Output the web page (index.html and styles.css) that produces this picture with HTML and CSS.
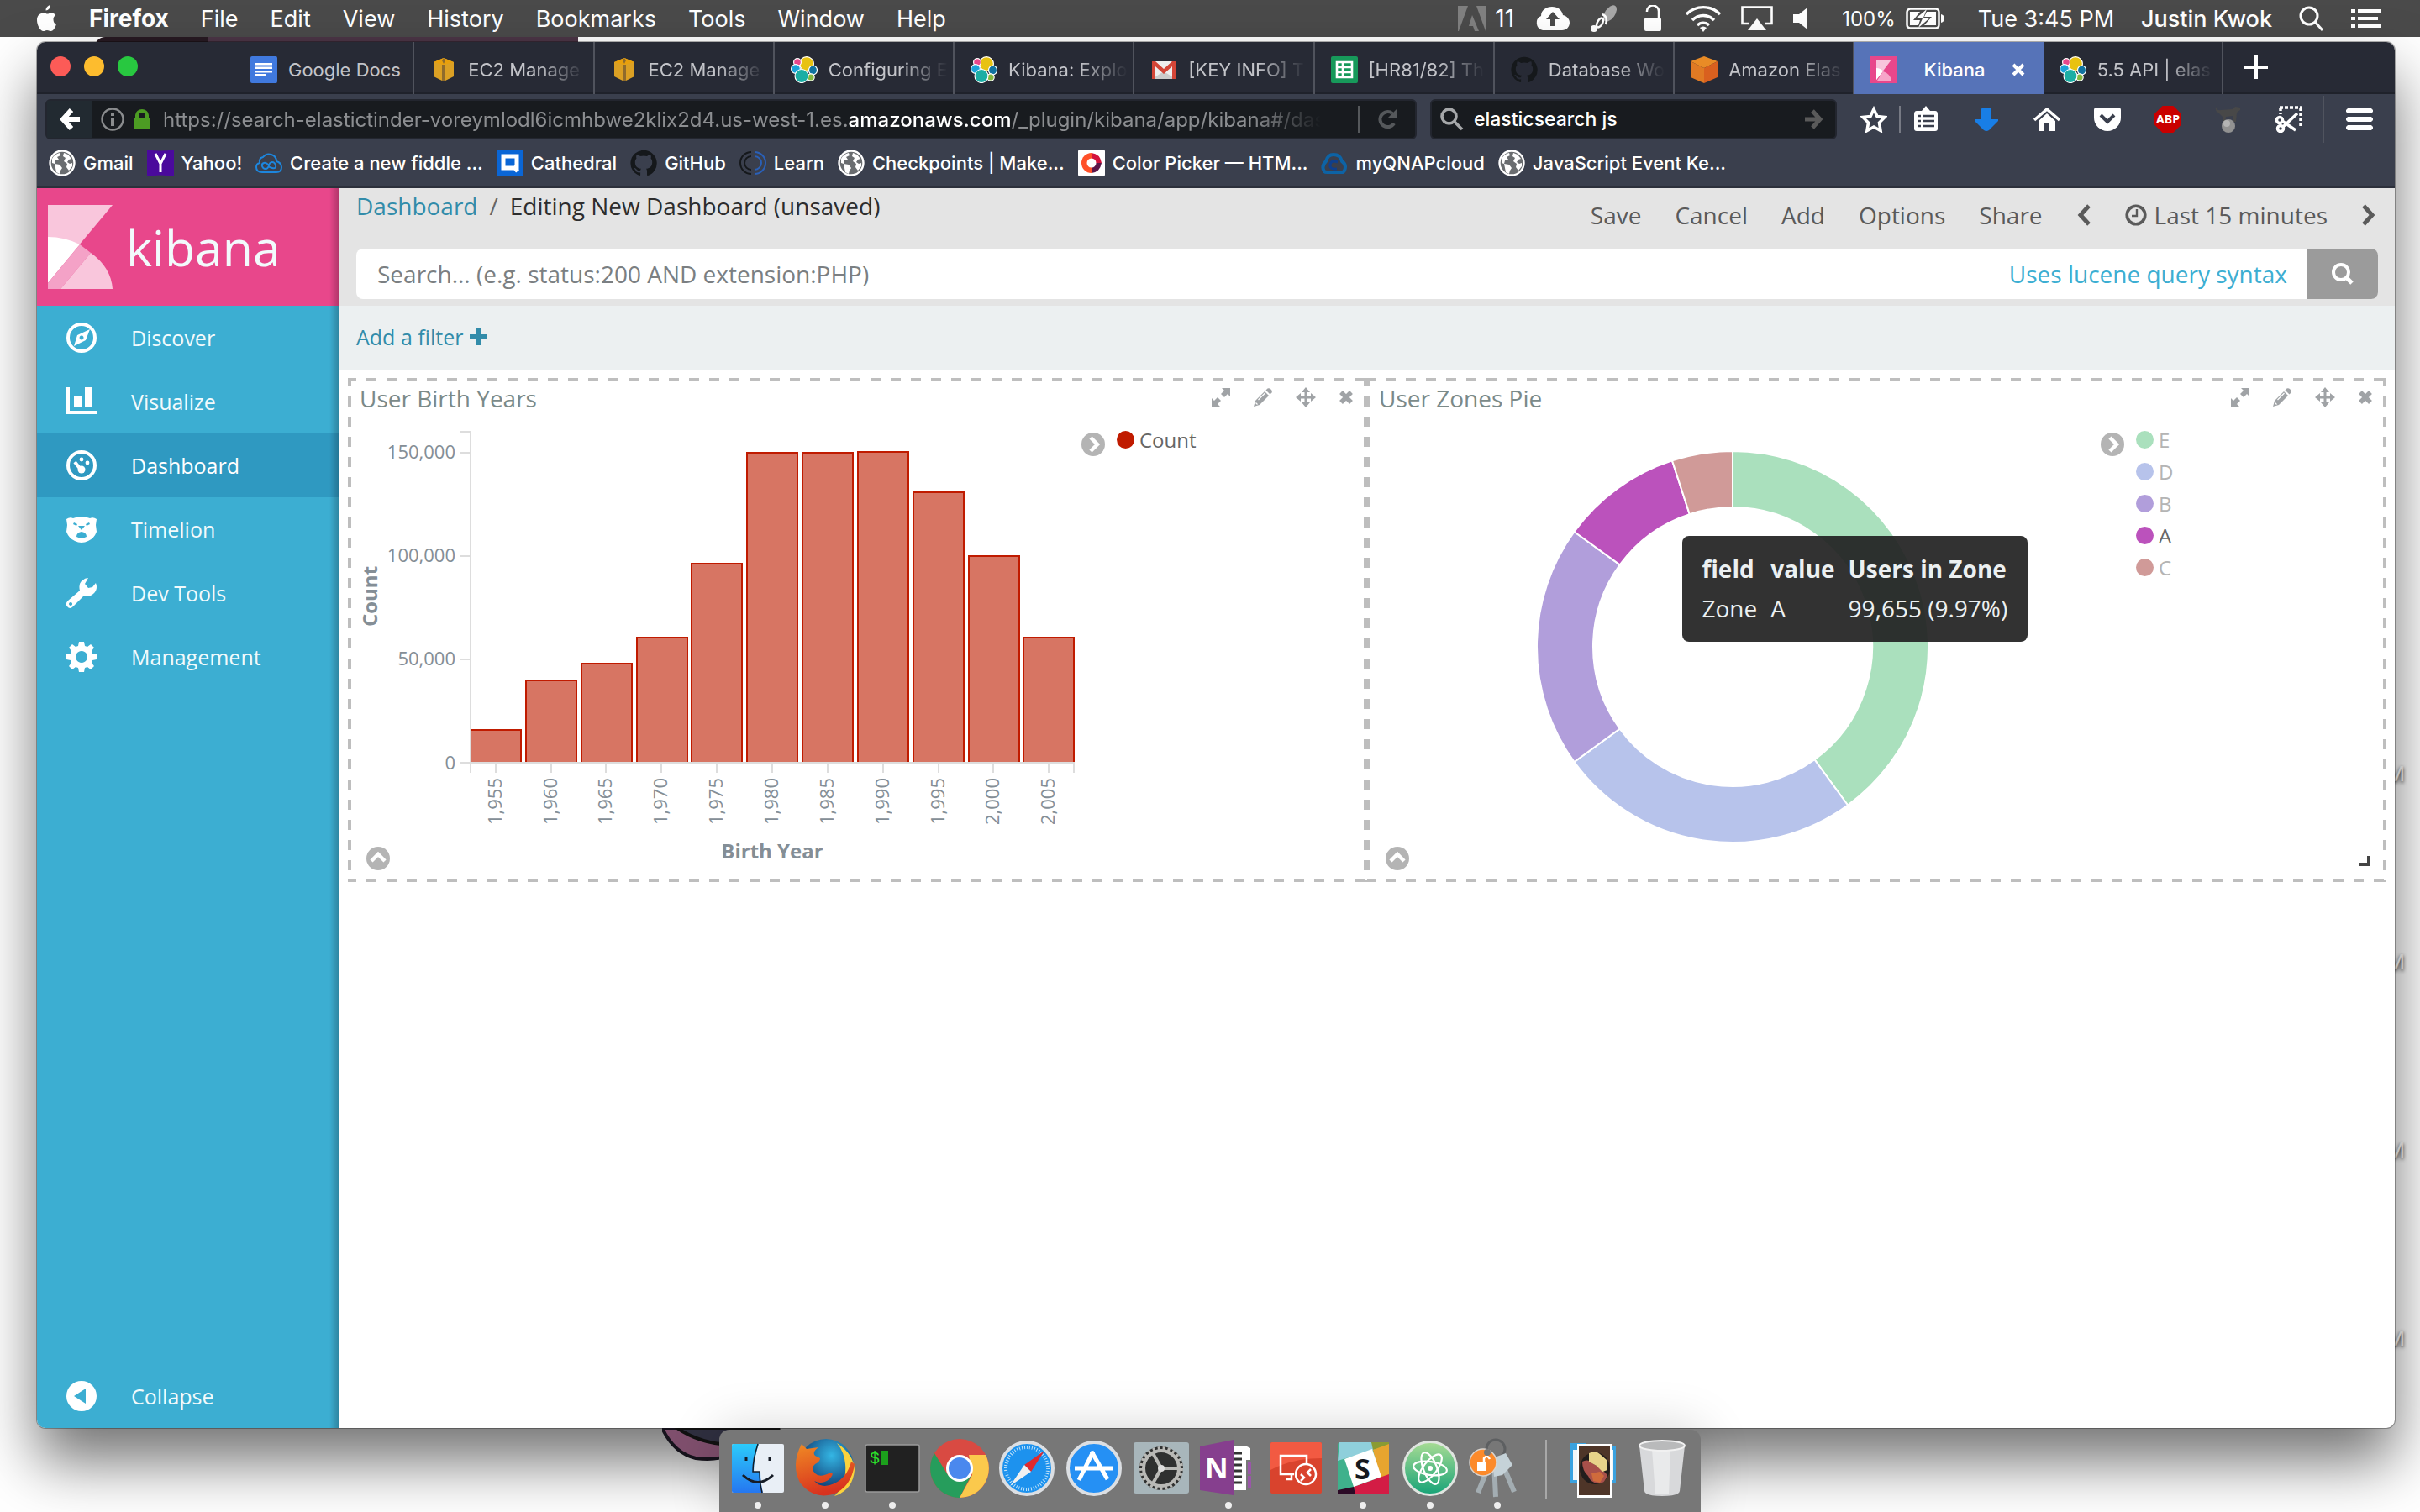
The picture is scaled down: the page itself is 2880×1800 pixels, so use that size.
FILE: index.html
```html
<!DOCTYPE html>
<html lang="en">
<head>
<meta charset="utf-8">
<title>Kibana</title>
<link rel="stylesheet" href="styles.css">
</head>
<body>
<svg class="sprite" aria-hidden="true">
  <symbol id="i-elastic" viewBox="0 0 32 32"><g stroke="#fff" stroke-width="1.2"><circle cx="19" cy="9" r="8.4" fill="#e8c211"/><circle cx="8" cy="7" r="4.4" fill="#e8478b"/><ellipse cx="6" cy="15" rx="5.4" ry="5.4" fill="#1ba2d8"/><ellipse cx="26.500" cy="16.500" rx="5" ry="5.500" fill="#10739f"/><ellipse cx="24" cy="25" rx="4.200" ry="4.200" fill="#86b93f"/><circle cx="13" cy="23.500" r="8" fill="#1caea4"/></g></symbol>
  <symbol id="i-ec2" viewBox="0 0 32 32"><path d="M4 7l12-5 12 5v17l-12 6-12-6z" fill="#dba024"/><path d="M4 7l12-5 12 5-12 3z" fill="#e9a00c"/><path d="M14 10h4v20h-4z" fill="#8f6b2c"/><path d="M16 2l2 3-2 4-2-4z" fill="#8f6b2c"/></symbol>
  <symbol id="i-github" viewBox="0 0 32 32"><path fill="#15181b" d="M16 .8a15.500 15.500 0 0 0-5 30.200c.8.100 1.100-.3 1.100-.8v-3c-4.500 1-5.400-1.900-5.400-1.900-.7-1.900-1.800-2.400-1.800-2.400-1.400-1 .1-1 .1-1 1.600.1 2.500 1.700 2.500 1.700 1.400 2.400 3.700 1.700 4.600 1.300.1-1 .6-1.700 1-2.100-3.600-.4-7.300-1.800-7.300-7.900 0-1.700.6-3.200 1.700-4.300-.2-.4-.7-2 .1-4.200 0 0 1.400-.4 4.400 1.600a15 15 0 0 1 8 0c3-2 4.400-1.600 4.400-1.600.8 2.200.3 3.800.1 4.200 1.100 1.100 1.700 2.600 1.700 4.300 0 6.100-3.700 7.500-7.300 7.900.6.500 1.100 1.500 1.100 3v4.400c0 .5.300.9 1.100.8A15.500 15.500 0 0 0 16 .8z"/></symbol>
  <symbol id="i-globe" viewBox="0 0 32 32"><circle cx="16" cy="16" r="14.500" fill="#6a6d70" stroke="#fff" stroke-width="2.400"/><path fill="#fff" d="M4 11c2-4 5-6 9-7l1 3-4 2 2 3-4 1-1 4-3-1zM7 17l6 1 3 4-2 3-1 4-4-2-1-5zM18 4l5 2 4 5-3 1-2 3 3 2 3-1v4l-4 5-3-4 1-4-4-3 2-4-3-2z"/></symbol>
  <symbol id="i-expand" viewBox="0 0 22 22"><path fill="#a0a3a6" d="M12 0h10v10l-3-3-4 4-4-4 4-4zM0 22V12l3 3 4-4 4 4-4 4 3 3z"/></symbol>
  <symbol id="i-pencil" viewBox="0 0 22 22"><path fill="#a0a3a6" d="M13 4l5 5L7 20l-7 2 2-7z"/><path fill="#a0a3a6" d="M14.500 2.500l2-2q2-1 4 1t1 4l-2 2z"/><path stroke="#fff" stroke-width="1.200" d="M5.500 14L13.500 6M2.500 17.500l2 2"/></symbol>
  <symbol id="i-move" viewBox="0 0 24 24"><path fill="#a0a3a6" d="M12 0l5 6h-3.500v4.500H18V7l6 5-6 5v-3.500h-4.500V18H17l-5 6-5-6h3.500v-4.500H6V17l-6-5 6-5v3.500h4.500V6H7z"/></symbol>
  <symbol id="i-close" viewBox="0 0 16 16"><path stroke="#a0a3a6" stroke-width="5.400" d="M2 2l12 12M14 2L2 14"/></symbol>
  <symbol id="i-circle-right" viewBox="0 0 28 28"><circle cx="14" cy="14" r="14" fill="#b4b4b4"/><path fill="none" stroke="#fff" stroke-width="4.500" d="M11 6l8 8-8 8"/></symbol>
  <symbol id="i-circle-up" viewBox="0 0 28 28"><circle cx="14" cy="14" r="14" fill="#b4b4b4"/><path fill="none" stroke="#fff" stroke-width="4.500" d="M6 17l8-8 8 8"/></symbol>
</svg>

<header class="menubar">
  <nav class="menus" aria-label="Menu bar">
    <button class="menu-item" aria-label="Apple"><svg width="26" height="32" viewBox="0 0 26 32"><path fill="#fff" d="M18 0c.3 3-2.500 6.500-5.400 6.500C12.200 3.500 15 .4 18 0zM21.500 17c0-3.300 2.600-4.900 2.800-5-1.600-2.300-4-2.600-4.800-2.600-2-.2-4 1.200-5 1.200s-2.700-1.200-4.400-1.200C4.500 9.500 2 13 2 18c0 6 4 13 7.500 13 1.700 0 2.400-1.100 4.500-1.100s2.700 1.100 4.500 1.100c3.200 0 5.700-5.500 6.300-7.800-.2-.1-3.300-1.500-3.300-6.200z"/></svg></button>
    <button class="menu-item app-name">Firefox</button>
    <button class="menu-item">File</button>
    <button class="menu-item">Edit</button>
    <button class="menu-item">View</button>
    <button class="menu-item">History</button>
    <button class="menu-item">Bookmarks</button>
    <button class="menu-item">Tools</button>
    <button class="menu-item">Window</button>
    <button class="menu-item">Help</button>
  </nav>
  <div class="tray">
    <svg width="34" height="30" viewBox="0 0 34 30"><path fill="#808080" d="M0 0h12L1 30H0zM22 0h12v30h-1zM17 11l8 19h-5l-2-6h-5z"/></svg>
    <span class="adobe-count">11</span>
    <svg width="40" height="30" viewBox="0 0 40 30"><path fill="#fff" fill-rule="evenodd" d="M8 29a9 9 0 0 1-2-17C6 5 12 1 19 1c7 0 12 4 13 10 5 1 8 5 8 9 0 5-4 9-9 9zM20 7l-8 9h5v8h6v-8h5z"/></svg>
    <svg width="36" height="34" viewBox="0 0 36 34"><ellipse cx="24" cy="11" rx="6" ry="11" transform="rotate(35 24 11)" fill="#a8a8a8"/><g fill="none" stroke="#fff" stroke-width="2.500"><ellipse cx="12" cy="22" rx="3" ry="6" transform="rotate(30 12 22)"/><path d="M15 12q7 3 4 12"/></g><circle cx="5" cy="29" r="4" fill="#fff"/></svg>
    <svg width="30" height="32" viewBox="0 0 30 32"><rect x="5" y="15" width="20" height="16" rx="2" fill="#fff"/><path fill="none" stroke="#fff" stroke-width="2.500" d="M8 8V7a6 6 0 0 1 14 1v8"/></svg>
    <svg width="42" height="32" viewBox="0 0 42 32"><g fill="none" stroke="#fff" stroke-width="3.400"><path d="M1 11a28 28 0 0 1 40 0M8 18a18 18 0 0 1 26 0M14 24a10 10 0 0 1 14 0"/></g><path fill="#fff" d="M21 32l-4-5q4-3 8 0z"/></svg>
    <svg width="38" height="30" viewBox="0 0 38 30"><path fill="none" stroke="#fff" stroke-width="2.600" d="M9 21H1.500V1.500h35V21H29"/><path fill="#fff" d="M19 15l11 14H8z"/></svg>
    <svg width="34" height="26" viewBox="0 0 34 26"><path fill="#fff" d="M0 8h7l10-8v26L7 18H0z"/></svg>
    <span class="battery-text">100%</span>
    <svg width="46" height="26" viewBox="0 0 46 26"><rect x="1.500" y="1.500" width="38" height="23" rx="4" fill="none" stroke="#fff" stroke-width="2.500"/><path fill="#fff" d="M5 5h12l-8 10h8l-2 6H5zM36 5H25l-3 6h9l-9 10h14zM42 8q4 1 4 5t-4 5zM25 2L12 13h8l-5 11 14-12h-8z"/></svg>
  </div>
  <div class="tray tray-end">
    <span class="menu-text">Tue 3:45 PM</span>
    <span class="menu-text user">Justin Kwok</span>
    <button class="menu-item" aria-label="Spotlight"><svg width="30" height="30" viewBox="0 0 30 30"><g fill="none" stroke="#fff" stroke-width="3"><circle cx="12" cy="12" r="10"/><path d="M19 19l9 10"/></g></svg></button>
    <button class="menu-item" aria-label="Notifications"><svg width="36" height="22" viewBox="0 0 36 22"><path fill="#fff" d="M0 0h5v4H0zM8 0h28v4H8zM0 9h5v4H0zM8 9h24v4H8zM0 18h5v4H0zM8 18h28v4H8z"/></svg></button>
  </div>
</header>

<div class="desktop">
  <div class="back-window"></div>
  <div class="file-labels" aria-hidden="true"><span>M</span><span>M</span><span>M</span><span>M</span></div>
  <svg class="wallpaper" width="170" height="60" viewBox="0 0 170 60" aria-hidden="true"><path d="M0 0q14 30 40 36 24 3 42-4l30-32z" fill="#7f4f6d" stroke="#16131c" stroke-width="4"/><path d="M18 0q26 18 62 20l60-20z" fill="#2f2f3f" stroke="#111" stroke-width="4"/></svg>

  <div class="window">
    <div class="tabstrip">
      <div class="lights"><button class="light red" aria-label="Close"></button><button class="light yellow" aria-label="Minimize"></button><button class="light green" aria-label="Zoom"></button></div>
      <div class="tabs">
        <button class="tab"><svg class="ico" viewBox="0 0 32 32"><rect width="32" height="32" rx="2" fill="#4079de"/><path fill="#fff" d="M6 8h20v2.500H6zM6 12.500h20V15H6zM6 17h20v2.500H6zM6 21h12v2.500H6z"/></svg><span>Google Docs</span></button>
        <button class="tab"><svg class="ico"><use href="#i-ec2"/></svg><span>EC2 Manage</span></button>
        <button class="tab"><svg class="ico"><use href="#i-ec2"/></svg><span>EC2 Manage</span></button>
        <button class="tab"><svg class="ico"><use href="#i-elastic"/></svg><span>Configuring E</span></button>
        <button class="tab"><svg class="ico"><use href="#i-elastic"/></svg><span>Kibana: Explo</span></button>
        <button class="tab"><svg class="ico" viewBox="0 0 32 32"><path fill="#eee" d="M2 6h28v21H2z"/><path fill="#ccc" d="M16 18L2 27h28z"/><path fill="#d44638" d="M2 6h4l10 9L26 6h4v21h-4V12l-10 9L6 12v15H2z"/></svg><span>[KEY INFO] T</span></button>
        <button class="tab"><svg class="ico" viewBox="0 0 32 32"><rect width="32" height="32" rx="2" fill="#17995a"/><path fill="none" stroke="#fff" stroke-width="2.600" d="M7 7h18v18H7zM7 13h18M7 19h18M14 7v18"/></svg><span>[HR81/82] Th</span></button>
        <button class="tab"><svg class="ico"><use href="#i-github"/></svg><span>Database Wo</span></button>
        <button class="tab"><svg class="ico" viewBox="0 0 32 32"><path fill="#e98b26" d="M0 6L16 0l16 6-16 8z"/><path fill="#e07a24" d="M0 6l16 8v18L0 25z"/><path fill="#d9601f" d="M32 6l-16 8v18l16-7z"/></svg><span>Amazon Elas</span></button>
        <button class="tab active"><svg class="ico" viewBox="0 0 32 32"><path fill="#e8478b" d="M0 0h32v32H0z"/><path fill="#f8c4dc" d="M7 4h18L7 28z"/><path fill="#fff" d="M7 14q5 0 8 4L7 28z"/><path fill="#f6a5c9" d="M15 18q9 3 10 11H8z"/></svg><span>Kibana</span><svg class="tab-close" viewBox="0 0 16 16"><path stroke="#fff" stroke-width="4" d="M2 2l12 12M14 2L2 14"/></svg></button>
        <button class="tab"><svg class="ico"><use href="#i-elastic"/></svg><span>5.5 API | elas</span></button>
      </div>
      <button class="new-tab" aria-label="New tab"><svg width="28" height="28" viewBox="0 0 28 28"><path stroke="#fff" stroke-width="4" d="M14 0v28M0 14h28"/></svg></button>
    </div>

    <div class="navbar">
      <div class="urlbar">
        <button class="back" aria-label="Back"><svg width="24" height="26" viewBox="0 0 24 26"><path fill="none" stroke="#fff" stroke-width="6" d="M14 2L4 13l10 11M4 13h20"/></svg></button>
        <svg width="28" height="28" viewBox="0 0 28 28"><circle cx="14" cy="14" r="12.500" fill="none" stroke="#8a8c8e" stroke-width="2.400"/><path fill="#8a8c8e" d="M12 6h4v4h-4zM12 12h4v10h-4z"/></svg>
        <svg width="22" height="24" viewBox="0 0 22 24"><rect x="1" y="10" width="20" height="14" rx="2" fill="#4c9c23"/><path fill="none" stroke="#4c9c23" stroke-width="4" d="M5 11V7a6 5 0 0 1 12 0v4"/></svg>
        <div class="url" role="textbox" contenteditable="true" spellcheck="false" aria-label="Address">https://search-elastictinder-voreymlodl6icmhbwe2klix2d4.us-west-1.es.<b>amazonaws.com</b>/_plugin/kibana/app/kibana#/das</div>
        <button class="reload" aria-label="Reload"><svg width="24" height="24" viewBox="0 0 24 24"><path fill="none" stroke="#55585b" stroke-width="4" d="M20 17a9 9 0 1 1-2-12"/><path fill="#55585b" d="M23 0v10H13z"/></svg></button>
      </div>
      <div class="searchbar">
        <svg width="28" height="28" viewBox="0 0 28 28"><g fill="none" stroke="#a6a8aa" stroke-width="3.600"><circle cx="10.500" cy="10.500" r="8.500"/><path d="M17 17l9 9"/></g></svg>
        <input type="text" value="elasticsearch js" aria-label="Search the web">
        <svg width="22" height="24" viewBox="0 0 22 24"><path fill="none" stroke="#5a5a5a" stroke-width="5" d="M0 12h16M9 2l9 10-9 10"/></svg>
      </div>
      <div class="tools">
        <button aria-label="Bookmark"><svg width="32" height="32" viewBox="0 0 32 32"><path fill="none" stroke="#fff" stroke-width="3.600" d="M16 4l4 8.500 9 1-6.500 6.500 1.500 9.500-8-4.500-8 4.500L9.500 20 3 13.500l9-1z"/></svg></button>
        <i class="rule"></i>
        <button aria-label="Reading list"><svg width="30" height="32" viewBox="0 0 30 32"><path fill="#fff" d="M10 6l5-6 5 6h6q3 0 3 4v17q0 3-3 3H4q-3 0-3-3V10q0-4 3-4z"/><path stroke="#3a3f4d" stroke-width="2.400" d="M5 12h4M5 18h4M5 24h4M11 12h14M11 18h14M11 24h14"/></svg></button>
        <button aria-label="Downloads"><svg width="28" height="28" viewBox="0 0 28 28"><path fill="#187ee6" d="M8 2q0-2 2-2h8q2 0 2 2v12h8v2L17 27q-3 2-6 0L0 16v-2h8z"/></svg></button>
        <button aria-label="Home"><svg width="32" height="28" viewBox="0 0 32 28"><path fill="none" stroke="#fff" stroke-width="3.500" d="M1 15L16 2l15 13"/><path fill="#fff" d="M6 16l10-9 10 9v12h-7V18h-6v10H6z"/></svg></button>
        <button aria-label="Pocket"><svg width="32" height="28" viewBox="0 0 32 28"><path fill="#fff" d="M0 3q0-3 3-3h26q3 0 3 3v9a16 16 0 0 1-32 0z"/><path fill="none" stroke="#3a3f4d" stroke-width="4" d="M8 9l8 8 8-8"/></svg></button>
        <button class="abp"><span>ABP</span></button>
        <button aria-label="Greasemonkey"><svg width="32" height="32" viewBox="0 0 32 32"><path fill="#484848" d="M1 0q0 6 6 5l14-1 3-3 6 1v3l-4 3-1 11h-3l-1-7-8 1-1 7h-3V13L4 8Q0 7 1 0z"/><circle cx="16" cy="24" r="8" fill="#929292"/><circle cx="14" cy="21" r="4" fill="#b4b4b4"/></svg></button>
        <button aria-label="Screenshot"><svg width="32" height="32" viewBox="0 0 32 32"><g fill="none" stroke="#fff" stroke-width="3.500"><path d="M5 2h27" stroke-dasharray="4 2"/><path d="M6 2v8M30 2v24" stroke-dasharray="4 2"/><circle cx="5" cy="17" r="3.500"/><circle cx="6" cy="27" r="3.500"/><path d="M8 18l16 11M9 25L26 9"/></g></svg></button>
        <i class="rule tall"></i>
        <button class="burger" aria-label="Menu"><svg width="32" height="26" viewBox="0 0 32 26"><path fill="#fff" d="M2 0h28l2 2v2l-2 2H2L0 4V2zM2 10h28l2 2v2l-2 2H2l-2-2v-2zM2 20h28l2 2v2l-2 2H2l-2-2v-2z"/></svg></button>
      </div>
    </div>

    <nav class="bookmarks" aria-label="Bookmarks">
      <a href="#"><svg class="ico"><use href="#i-globe"/></svg>Gmail</a>
      <a href="#"><svg class="ico" viewBox="0 0 32 32"><path fill="#4a0a9c" d="M0 0q16 3 32 0v32q-16-3-32 0z"/><path stroke="#fff" stroke-width="3" fill="none" d="M10 5l6 12 6-12M16 16v11"/></svg>Yahoo!</a>
      <a href="#"><svg class="ico" viewBox="0 0 32 32"><g fill="none" stroke="#1d86dd" stroke-width="2"><path d="M8 27q-7 0-7-6 0-4 4-5-1-6 4-7Q13 4 19 6q6 2 6 8 6 2 6 7 0 6-6 6z"/><path d="M16 19q-3-4-6-3t-2 4 4 3 4-4 4-4 4 4-4 3-4-3z"/></g></svg>Create a new fiddle ...</a>
      <a href="#"><svg class="ico" viewBox="0 0 32 32"><rect width="32" height="32" rx="4" fill="#0a66d6"/><path fill="none" stroke="#fff" stroke-width="5" d="M8 8h16v14H8zM20 20l5 6"/></svg>Cathedral</a>
      <a href="#"><svg class="ico"><use href="#i-github"/></svg>GitHub</a>
      <a href="#"><svg class="ico" viewBox="0 0 32 32"><g fill="none" stroke-width="2"><path stroke="#15181b" d="M14 3a13 13 0 0 0 0 26M14 8a8 8 0 0 0 0 16"/><path stroke="#2a60b8" d="M18 3a13 13 0 0 1 0 26M18 8a8 8 0 0 1 0 16"/></g></svg>Learn</a>
      <a href="#"><svg class="ico"><use href="#i-globe"/></svg>Checkpoints | Make...</a>
      <a href="#"><svg class="ico" viewBox="0 0 32 32"><rect width="32" height="32" rx="2" fill="#fff"/><path fill="#ff5029" d="M16 4v24A12 12 0 0 1 16 4z"/><path fill="#d3123c" d="M16 4q10 1 12 12H16z"/><path fill="#5c1649" d="M16 28q10-1 12-12H16z"/><circle cx="16" cy="16" r="5.500" fill="#fff"/></svg>Color Picker — HTM...</a>
      <a href="#"><svg class="ico" viewBox="0 0 32 32"><path fill="none" stroke="#0d63a5" stroke-width="4" d="M4 26q-4-6 2-12 2-8 9-8 8 0 10 8 6 4 3 11-1 2-3 2H7q-2 0-3-1z"/><path fill="none" stroke="#0f3f8e" stroke-width="3" d="M20 15q-8-3-9 3t8 5"/></svg>myQNAPcloud</a>
      <a href="#"><svg class="ico"><use href="#i-globe"/></svg>JavaScript Event Ke...</a>
    </nav>

    <div class="kibana">
      <aside class="sidebar">
        <a class="logo" href="#"><svg width="77" height="100" viewBox="0 0 77 100"><path fill="#f9c6dc" d="M0 0h77L0 92z"/><path fill="#fff" d="M0 38q20 0 38 9L0 93z"/><path fill="#f4a2c7" d="M38 47l13 10-36 43H0v-7z"/><path fill="#f9c6dc" d="M51 57q24 17 26 43H15z"/></svg><span>kibana</span></a>
        <a class="nav-link" href="#"><svg viewBox="0 0 36 36"><circle cx="18" cy="18" r="16" fill="none" stroke="#fff" stroke-width="4"/><path fill="#fff" fill-rule="evenodd" d="M28 8L23 21 9 28l4-13zM18 15.500a2.500 2.500 0 1 0 .1 0z"/></svg>Discover</a>
        <a class="nav-link" href="#"><svg viewBox="0 0 36 36"><path fill="#fff" d="M0 1h4v28h32v4H0zM9 11h9v13H9zM22 1h9v23h-9z"/></svg>Visualize</a>
        <a class="nav-link current" href="#"><svg viewBox="0 0 36 36"><circle cx="18" cy="18" r="16" fill="none" stroke="#fff" stroke-width="4"/><path stroke="#fff" stroke-width="4" d="M10 14l8 10"/><circle cx="18" cy="23" r="4.500" fill="#fff"/><circle cx="18" cy="11" r="2.400" fill="#fff"/><circle cx="25" cy="15" r="2.400" fill="#fff"/></svg>Dashboard</a>
        <a class="nav-link" href="#"><svg viewBox="0 0 36 36"><path fill="#fff" fill-rule="evenodd" d="M0 6q4-3 8-1 10-4 20 0 4-2 8 1l-1 7 1 8q-3 8-10 11-8 4-16 0Q3 29 0 21l1-8zM9 10l4 2-1 2-4-2zM27 10l-4 2 1 2 4-2zM14 14h8l-4 5zM12 27q0-5 6-6 6 1 6 6-6 3-12 0z"/></svg>Timelion</a>
        <a class="nav-link" href="#"><svg viewBox="0 0 36 36"><path fill="#fff" fill-rule="evenodd" d="M26 0l-4 7 4 5 5-1 4-5q3 8-3 13-4 4-11 2L8 34q-4 4-7 0-3-3 1-7l14-12q-2-8 3-12 3-3 7-3zM5 29a2 2 0 1 0 .1 0z"/></svg>Dev Tools</a>
        <a class="nav-link" href="#"><svg viewBox="0 0 36 36"><path fill="#fff" fill-rule="evenodd" d="M15 0h6l1 5 3 1 4-3 4 4-3 4 1 3 5 1v6l-5 1-1 3 3 4-4 4-4-3-3 1-1 5h-6l-1-5-3-1-4 3-4-4 3-4-1-3-5-1v-6l5-1 1-3-3-4 4-4 4 3 3-1zM18 11a7 7 0 1 0 .1 0z"/></svg>Management</a>
        <button class="nav-link collapse"><svg viewBox="0 0 36 36"><circle cx="18" cy="18" r="18" fill="#fff"/><path fill="#3caed2" d="M23 9v18L9 18z"/></svg>Collapse</button>
      </aside>

      <main class="content">
        <div class="topnav">
          <div class="topnav-row">
            <div class="crumbs"><a href="#">Dashboard</a><span class="slash">/</span><span>Editing New Dashboard (unsaved)</span></div>
            <div class="actions">
              <button>Save</button><button>Cancel</button><button>Add</button><button>Options</button><button>Share</button>
              <button aria-label="Earlier"><svg width="18" height="26" viewBox="0 0 18 26"><path fill="none" stroke="#5a5a5a" stroke-width="5" d="M15 2L5 13l10 11"/></svg></button>
              <button class="time"><svg width="26" height="26" viewBox="0 0 26 26"><g fill="none" stroke="#5a5a5a"><circle cx="13" cy="13" r="10.800" stroke-width="3.600"/><path stroke-width="2.400" d="M14 6v8H8"/></g></svg>Last 15 minutes</button>
              <button aria-label="Later"><svg width="18" height="26" viewBox="0 0 18 26"><path fill="none" stroke="#5a5a5a" stroke-width="5" d="M3 2l10 11L3 24"/></svg></button>
            </div>
          </div>
          <form class="query">
            <input type="text" placeholder="Search... (e.g. status:200 AND extension:PHP)" aria-label="Query">
            <a href="#">Uses lucene query syntax</a>
            <button type="button" aria-label="Search"><svg width="28" height="28" viewBox="0 0 28 28"><g fill="none" stroke="#fff" stroke-width="4"><circle cx="12" cy="12" r="9"/><path stroke-width="5" d="M18 18l7 7"/></g></svg></button>
          </form>
        </div>
        <div class="filterbar"><a href="#">Add a filter <svg width="20" height="20" viewBox="0 0 20 20"><path stroke="#328caa" stroke-width="6" d="M10 0v20M0 10h20"/></svg></a></div>

        <div class="grid">
          <section class="panel">
            <header><h2>User Birth Years</h2>
              <div class="panel-tools"><button aria-label="Expand"><svg width="22" height="22"><use href="#i-expand"/></svg></button><button aria-label="Edit"><svg width="22" height="22"><use href="#i-pencil"/></svg></button><button aria-label="Move"><svg width="24" height="24"><use href="#i-move"/></svg></button><button aria-label="Remove"><svg width="16" height="16"><use href="#i-close"/></svg></button></div>
            </header>
            <div class="panel-body">
              <div class="chart">
                <svg class="bars" viewBox="0 0 869 546" role="img" aria-label="Count by birth year">
                  <g class="bar">
                    <path d="M142 408V369h60v39"/><path d="M208 408V310h60v98"/><path d="M274 408V290h60v118"/><path d="M340 408V259h60v149"/><path d="M405 408V171h60v237"/><path d="M471 408V39h60v369"/><path d="M537 408V39h60v369"/><path d="M603 408V38h60v370"/><path d="M669 408V86h60v322"/><path d="M735 408V162h60v246"/><path d="M800 408V259h60v149"/>
                  </g>
                  <path class="axis" d="M130 14h12v394M130 39h12M130 162h12M130 285h12M130 408h730v12M142 408v12M172 408v12M238 408v12M303 408v12M369 408v12M435 408v12M501 408v12M567 408v12M633 408v12M699 408v12M764 408v12M830 408v12"/>
                  <g class="label">
                    <text x="124" y="46">150,000</text><text x="124" y="169">100,000</text><text x="124" y="292">50,000</text><text x="124" y="416">0</text>
                    <text transform="translate(179 426) rotate(-90)">1,955</text><text transform="translate(245 426) rotate(-90)">1,960</text><text transform="translate(310 426) rotate(-90)">1,965</text><text transform="translate(376 426) rotate(-90)">1,970</text><text transform="translate(442 426) rotate(-90)">1,975</text><text transform="translate(508 426) rotate(-90)">1,980</text><text transform="translate(574 426) rotate(-90)">1,985</text><text transform="translate(640 426) rotate(-90)">1,990</text><text transform="translate(706 426) rotate(-90)">1,995</text><text transform="translate(771 426) rotate(-90)">2,000</text><text transform="translate(837 426) rotate(-90)">2,005</text>
                  </g>
                  <g class="axis-title"><text x="501" y="522">Birth Year</text><text transform="translate(31 210) rotate(-90)">Count</text></g>
                </svg>
              </div>
              <div class="legend">
                <button class="legend-toggle" aria-label="Toggle legend"><svg width="28" height="28"><use href="#i-circle-right"/></svg></button>
                <ul><li><button class="key count">Count</button></li></ul>
              </div>
            </div>
            <button class="spy" aria-label="Show data"><svg width="28" height="28"><use href="#i-circle-up"/></svg></button>
          </section>

          <section class="panel">
            <header><h2>User Zones Pie</h2>
              <div class="panel-tools"><button aria-label="Expand"><svg width="22" height="22"><use href="#i-expand"/></svg></button><button aria-label="Edit"><svg width="22" height="22"><use href="#i-pencil"/></svg></button><button aria-label="Move"><svg width="24" height="24"><use href="#i-move"/></svg></button><button aria-label="Remove"><svg width="16" height="16"><use href="#i-close"/></svg></button></div>
            </header>
            <div class="panel-body">
              <div class="chart pie">
                <div class="donut">
                  <svg width="468" height="468" viewBox="-234 -234 468 468" role="img" aria-label="Users by zone"><g stroke="#fff" stroke-width="2">
                    <path fill="#aae0bd" d="M0-233A233 233 0 0 1 137 188.500L97.600 134.300A166 166 0 0 0 0-166z"/>
                    <path fill="#b7c3eb" d="M137 188.500A233 233 0 0 1-188.500 137L-134.300 97.600A166 166 0 0 0 97.600 134.300z"/>
                    <path fill="#b19edb" d="M-188.500 137A233 233 0 0 1-188.500-137L-134.300-97.600A166 166 0 0 0-134.300 97.600z"/>
                    <path fill="#bb52bc" d="M-188.500-137A233 233 0 0 1-72-221.600L-51.300-157.900A166 166 0 0 0-134.300-97.600z"/>
                    <path fill="#d09a98" d="M-72-221.600A233 233 0 0 1 0-233V-166A166 166 0 0 0-51.300-157.900z"/>
                  </g></svg>
                  <div class="tooltip" role="tooltip"><table><thead><tr><th>field</th><th>value</th><th>Users in Zone</th></tr></thead><tbody><tr><td>Zone</td><td>A</td><td>99,655 (9.97%)</td></tr></tbody></table></div>
                </div>
              </div>
              <div class="legend">
                <button class="legend-toggle" aria-label="Toggle legend"><svg width="28" height="28"><use href="#i-circle-right"/></svg></button>
                <ul><li><button class="key e dim">E</button></li><li><button class="key d dim">D</button></li><li><button class="key b dim">B</button></li><li><button class="key a">A</button></li><li><button class="key c dim">C</button></li></ul>
              </div>
            </div>
            <button class="spy" aria-label="Show data"><svg width="28" height="28"><use href="#i-circle-up"/></svg></button>
            <i class="resize"></i>
          </section>
        </div>
      </main>
    </div>
  </div>

  <nav class="dock" aria-label="Dock">
    <button class="app running" aria-label="Finder"><svg viewBox="0 0 80 80"><defs><linearGradient id="gf" x2="0" y2="1"><stop stop-color="#2ccbfb"/><stop offset="1" stop-color="#2577f0"/></linearGradient></defs><rect x="9" y="11" width="62" height="58" rx="2" fill="#e9eff6"/><path fill="url(#gf)" d="M9 13q0-2 2-2h30q-6 18-6 33h8q0 14 3 25H11q-2 0-2-2z"/><g fill="none" stroke="#161c26" stroke-width="3"><path d="M26 26v5M54 26v5M22 48q18 17 36 0"/><path stroke-width="1.500" d="M40 11q-6 18-6 33h8q0 14 3 25"/></g></svg></button>
    <button class="app running" aria-label="Firefox"><svg viewBox="0 0 80 80"><defs><radialGradient id="gx" cx=".6" cy=".3" r=".7"><stop stop-color="#34b6e4"/><stop offset="1" stop-color="#0b2a63"/></radialGradient><linearGradient id="go" x2=".3" y2="1"><stop stop-color="#f08a24"/><stop offset="1" stop-color="#d8331f"/></linearGradient></defs><circle cx="41" cy="38" r="33" fill="url(#gx)"/><path fill="#fbd33c" d="M54 10q20 13 21 32-2 24-24 31 15-14 13-38-1-14-10-25z"/><path fill="url(#go)" d="M12 11l6 6 14-2q-8 6-4 10l6 3q0 4-6 7-6 5 0 11 6 6 18-1 6 0-1 8-9 7-18 2 9 10 24 3 15-7 20-26l4 3q-4 28-26 36-24 6-39-14Q-1 35 12 11z"/></svg></button>
    <button class="app running" aria-label="Terminal"><svg viewBox="0 0 80 80"><rect x="8" y="12" width="64" height="56" rx="2" fill="#212121" stroke="#9a9a9a" stroke-width="1.500"/><text x="13" y="34" class="prompt">$</text><path fill="#1ca01c" d="M26 19h9v17h-9z"/></svg></button>
    <button class="app" aria-label="Chrome"><svg viewBox="0 0 80 80"><circle cx="40" cy="40" r="35" fill="#d94a42"/><path fill="#269d5c" d="M10 22a35 35 0 0 0 30 53l14-27-28 0z"/><path fill="#fbc94c" d="M71 24a35 35 0 0 1-31 51l15-27-4-24z"/><circle cx="40" cy="40" r="16" fill="#fff"/><circle cx="40" cy="40" r="13" fill="#4a88ee"/></svg></button>
    <button class="app" aria-label="Safari"><svg viewBox="0 0 80 80"><circle cx="40" cy="40" r="31" fill="#1d92ee" stroke="#dcdfe3" stroke-width="4"/><circle cx="40" cy="40" r="25" fill="none" stroke="#bfe2fa" stroke-width="4" stroke-dasharray="1 2"/><path fill="#e02a2e" d="M61 19L37 36l8 8z"/><path fill="#f1f1f1" d="M20 61l17-25 8 8z"/></svg></button>
    <button class="app" aria-label="App Store"><svg viewBox="0 0 80 80"><circle cx="40" cy="40" r="31" fill="#2590f4" stroke="#dcdfe3" stroke-width="4"/><path fill="none" stroke="#fff" stroke-width="5" d="M17 40h46M39 20L22 54M37 20l19 33"/></svg></button>
    <button class="app" aria-label="System Preferences"><svg viewBox="0 0 80 80"><rect x="7" y="9" width="66" height="61" rx="3" fill="#a8b6bb"/><circle cx="40" cy="40" r="26" fill="#2f3030"/><circle cx="40" cy="40" r="21" fill="none" stroke="#b9b9b6" stroke-width="4"/><circle cx="40" cy="40" r="24" fill="none" stroke="#b9b9b6" stroke-width="4" stroke-dasharray="3 3"/><path stroke="#b9b9b6" stroke-width="4" d="M40 40h20M40 40L30 22M40 40L30 58"/><circle cx="40" cy="40" r="4" fill="#ddd"/></svg></button>
    <button class="app running" aria-label="OneNote"><svg viewBox="0 0 80 80"><path fill="#fff" d="M40 14h22l4 2v14h-5v36H40z"/><path fill="#9a57a8" d="M63 33h4v14h-4zM63 49h4v14h-4z"/><path stroke="#333" stroke-width="3" d="M46 22h10M46 29h10M46 36h10M46 43h10M46 50h10M46 57h10"/><path fill="#863f8e" d="M6 14l40-8v66L6 66z"/><text x="12" y="52" class="letter n">N</text></svg></button>
    <button class="app" aria-label="Remote Desktop"><svg viewBox="0 0 80 80"><rect x="10" y="9" width="61" height="61" rx="2" fill="#d9432d"/><path fill="#f25a42" d="M10 11q0-2 2-2h57q2 0 2 2v17Q36 28 10 42z"/><g fill="none" stroke="#fff" stroke-width="2.500"><path d="M53 34v-9H22v22h16M35 47v6h-6"/><circle cx="52" cy="47" r="12" fill="#d9432d"/><path d="M46 47l4 4-4 4M58 41l-4 4 4 4"/></g></svg></button>
    <button class="app running" aria-label="Slack"><svg viewBox="0 0 80 80"><rect x="10" y="9" width="61" height="62" rx="3" fill="#3fb18c"/><path fill="#8fcfdb" d="M12 9h38l6 8-46 14z"/><path fill="#8a9b34" d="M50 9h21v4l-19 5z"/><path fill="#e7a52f" d="M52 18l19-7v38l-11 3z"/><path fill="#d31c45" d="M29 62l42-15v24H31z"/><path fill="#2b0a26" d="M10 66l19-4 2 9H10z"/><path fill="#fff" d="M18 29l33-12 11 33-33 12z"/><text x="30" y="53" class="letter s">S</text></svg></button>
    <button class="app running" aria-label="Atom"><svg viewBox="0 0 80 80"><defs><linearGradient id="ga" x2="0" y2="1"><stop stop-color="#a8dc94"/><stop offset="1" stop-color="#17a377"/></linearGradient></defs><circle cx="40" cy="40" r="31.500" fill="url(#ga)" stroke="#e0e5e0" stroke-width="3"/><g fill="none" stroke="#fff" stroke-width="2.200"><ellipse cx="40" cy="40" rx="20" ry="8" transform="rotate(8 40 40)"/><ellipse cx="40" cy="40" rx="20" ry="8" transform="rotate(68 40 40)"/><ellipse cx="40" cy="40" rx="20" ry="8" transform="rotate(-52 40 40)"/></g><circle cx="40" cy="40" r="3" fill="#fff"/></svg></button>
    <button class="app running" aria-label="Keychain"><svg viewBox="0 0 80 80"><circle cx="38" cy="17" r="11" fill="none" stroke="#5d5f61" stroke-width="3"/><path stroke="#a3adb2" stroke-width="6" d="M30 36L17 69M36 34l2 40M44 30l16 38"/><path fill="#c5d2d8" d="M34 28l16-6 8 14-12 12-10 2z"/><circle cx="23" cy="33" r="16" fill="#fc8a2b" stroke="#d9d4cf" stroke-width="1.500"/><path fill="#fff" d="M16 33h11v10H16z"/><path fill="none" stroke="#fff" stroke-width="2.500" d="M24 33v-5q4-5 7 1"/><circle cx="28" cy="21" r="4" fill="#777"/></svg></button>
    <i class="dock-rule"></i>
    <button class="app" aria-label="Pictures"><svg viewBox="0 0 80 80"><path fill="#3aa2e0" d="M11 10h18l2 4h34v44H11z"/><path fill="#f3f6f8" d="M14 18h48v36H14z"/><path fill="#fff" d="M19 11h42v64H19z"/><path fill="#4e3528" d="M21 14h37v58H21z"/><ellipse cx="40" cy="40" rx="18" ry="19" fill="#221d1c"/><path fill="#a8504a" d="M25 32q7-4 12 2l10 6 8 8q-3 11-12 10-8-1-11-9-7-6-7-17z"/><path fill="#cf6b3c" d="M36 46l10-2 5 5-5 8-8-2z"/><path fill="#e8d48a" d="M33 22q8-4 13 1l8 7 1 12-6 2-7-7-9-5z"/></svg></button>
    <button class="app" aria-label="Trash"><svg viewBox="0 0 80 80"><path fill="#d8d9db" d="M13 13h54l-6 54q-1 6-21 6t-21-6z"/><path fill="#e9eaeb" d="M28 17h22l-2 54H32z"/><ellipse cx="40" cy="13" rx="27" ry="6" fill="#b9babb" stroke="#f1f1f1" stroke-width="2"/></svg></button>
  </nav>
</div>
</body>
</html>
```
FILE: styles.css
```css
* { box-sizing: border-box; }
body {
  margin: 0;
  min-height: 100vh;
  display: flex;
  flex-direction: column;
  background: #fff;
  font-family: "Open Sans", "Noto Sans", sans-serif;
  font-size: 25px;
  overflow: hidden;
}
button, input { font: inherit; color: inherit; border: 0; padding: 0; background: none; outline: 0; }
a { text-decoration: none; color: inherit; }
svg { display: block; flex: none; }
.sprite { position: absolute; width: 0; height: 0; }
.ico { width: 32px; height: 32px; }

/* Menu bar */
.menubar {
  height: 44px;
  display: flex;
  align-items: center;
  padding: 0 46px 0 42px;
  background: #4a4a4a;
  color: #fff;
  font-family: Inter, "Liberation Sans", sans-serif;
  font-size: 27px;
}
.menus { display: flex; align-items: center; gap: 38px; margin-right: auto; }
.menu-item { display: flex; align-items: center; }
.app-name { font-weight: 700; font-size: 28px; }
.tray { display: flex; align-items: center; gap: 24px; }
.adobe-count { margin: 0 2px 0 -14px; font-size: 28px; }
.battery-text { font-size: 24px; margin-right: -12px; }
.tray-end { gap: 32px; margin-left: 40px; }
.user { font-weight: 500; }

/* Desktop */
.desktop {
  position: relative;
  flex: 1;
  display: flex;
  padding: 6px 30px 100px 44px;
}
.back-window {
  position: absolute;
  top: 0;
  left: 113px;
  width: 575px;
  height: 12px;
  border-radius: 12px 0 0 0;
  background: linear-gradient(90deg, #271a22 135px, #4b3546 135px);
}
.file-labels {
  position: absolute;
  right: 18px;
  top: 862px;
  display: flex;
  flex-direction: column;
  gap: 192px;
  font: 24px/32px Inter, sans-serif;
  color: #fff;
  text-align: right;
  text-shadow: 0 2px 4px #333;
}
.wallpaper { position: absolute; left: 788px; bottom: 40px; z-index: 1; }

.window {
  position: relative;
  flex: 1;
  display: flex;
  flex-direction: column;
  border-radius: 10px;
  overflow: hidden;
  background: #fff;
  box-shadow: 0 0 0 1px rgba(0, 0, 0, .3), 0 40px 70px rgba(0, 0, 0, .55);
}

/* Browser chrome */
.tabstrip, .navbar, .bookmarks { font-family: Inter, "Liberation Sans", sans-serif; font-size: 23px; color: #fff; }
.tabstrip { height: 62px; display: flex; background: #272a35; border-bottom: 2px solid #1f222b; }
.lights { width: 235px; display: flex; gap: 16px; padding: 17px 0 0 16px; }
.light { width: 24px; height: 24px; border-radius: 50%; }
.red { background: #fc5b57; }
.yellow { background: #fdbc2e; }
.green { background: #28c840; }
.tabs { flex: 1; display: flex; min-width: 0; }
.tab {
  flex: 1 1 0;
  min-width: 0;
  height: 62px;
  display: flex;
  align-items: center;
  gap: 13px;
  padding: 4px 10px 0 19px;
  border-right: 2px solid #50535d;
  color: #c3c4c9;
  font-size: 22px;
  line-height: 28px;
}
.tab span {
  flex: 1;
  white-space: nowrap;
  text-align: left;
  -webkit-mask-image: linear-gradient(90deg, #000 60%, transparent);
  mask-image: linear-gradient(90deg, #000 60%, transparent);
}
.tab:first-child span, .tab.active span { -webkit-mask-image: none; mask-image: none; }
.tab.active { background: #5673b8; color: #fff; border-color: #5673b8; padding-right: 20px; font-weight: 500; }
.tab.active span { text-align: center; }
.tab-close { width: 16px; height: 16px; }
.new-tab { width: 204px; padding-left: 25px; display: flex; align-items: center; }

.navbar { height: 60px; display: flex; align-items: center; padding-left: 10px; background: #3a3f4d; }
.urlbar, .searchbar {
  height: 48px;
  display: flex;
  align-items: center;
  border: 2px solid #23262f;
  border-radius: 6px;
  background: #181b1f;
}
.urlbar { flex: 1; min-width: 0; margin-right: 16px; gap: 10px; }
.back { width: 54px; height: 44px; display: flex; align-items: center; justify-content: center; background: #222a31; }
.url {
  flex: 1;
  min-width: 0;
  margin: 0 20px 0 4px;
  white-space: nowrap;
  outline: 0;
  color: #8c8e91;
  font-size: 24px;
  -webkit-mask-image: linear-gradient(90deg, #000 93%, transparent 99%);
  mask-image: linear-gradient(90deg, #000 93%, transparent 99%);
}
.url b { color: #fff; font-weight: 500; }
.reload { width: 68px; height: 32px; display: flex; align-items: center; justify-content: center; border-left: 2px solid #55585b; }
.searchbar { width: 484px; padding: 0 14px 0 10px; gap: 12px; }
.searchbar input { flex: 1; min-width: 0; font-weight: 500; }
.tools { display: flex; align-items: center; gap: 12px; padding-left: 14px; }
.tools button { width: 60px; height: 48px; display: flex; align-items: center; justify-content: center; }
.rule { width: 2px; height: 32px; margin: 0 -12px; background: #777a84; }
.rule.tall { height: 56px; margin: 0 -12px 0 -2px; background: #50545f; }
.tools .burger { width: 84px; }
.abp span {
  width: 32px;
  height: 32px;
  background: #c90000;
  clip-path: polygon(30% 0, 70% 0, 100% 30%, 100% 70%, 70% 100%, 30% 100%, 0 70%, 0 30%);
  font: 700 14px/32px "Open Sans", sans-serif;
  text-align: center;
}

.bookmarks {
  height: 52px;
  display: flex;
  gap: 16px;
  padding: 6px 14px 0;
  background: #3a3f4d;
  border-bottom: 2px solid #2c303b;
  font-size: 22px;
  font-weight: 500;
}
.bookmarks a { display: flex; height: 32px; align-items: center; gap: 9px; white-space: nowrap; }

/* Kibana */
.kibana { flex: 1; display: flex; min-height: 0; }
.sidebar {
  position: relative;
  width: 360px;
  display: flex;
  flex-direction: column;
  background: #3caed2;
  color: #f2fafc;
}
.sidebar::after {
  content: "";
  position: absolute;
  inset: 0 0 0 auto;
  width: 12px;
  background: linear-gradient(90deg, transparent, rgba(0, 0, 0, .25));
}
.logo { height: 140px; display: flex; align-items: center; gap: 16px; padding-left: 13px; background: #e8478b; font-size: 59px; line-height: 80px; }
.nav-link { height: 76px; display: flex; align-items: center; gap: 41px; padding-left: 35px; }
.nav-link svg { width: 36px; height: 36px; }
.nav-link.current { background: #2f99c1; color: #fff; }
.collapse { margin-top: auto; }

.content { flex: 1; min-width: 0; }
.topnav { height: 140px; padding: 0 20px; background: #e4e4e4; font-size: 28px; }
.topnav-row { height: 72px; display: flex; justify-content: space-between; }
.crumbs { display: flex; gap: 14px; line-height: 42px; color: #2d2d2d; }
.crumbs a, .filterbar a { color: #328caa; }
.slash { color: #666; }
.actions { display: flex; align-items: center; gap: 40px; height: 64px; padding-right: 2px; color: #5a5a5a; }
.time { display: flex; align-items: center; gap: 9px; }
.query { height: 60px; display: flex; align-items: center; background: #fff; border-radius: 8px; overflow: hidden; }
.query input { flex: 1; min-width: 0; height: 58px; padding-left: 25px; }
.query input::placeholder { color: #7b7f82; opacity: 1; }
.query a { color: #3caed2; margin-right: 24px; }
.query button { width: 84px; height: 60px; display: flex; align-items: center; justify-content: center; background: #9b9b9b; }
.filterbar { height: 76px; display: flex; align-items: center; padding: 0 0 2px 20px; background: #ecf0f1; }
.filterbar a { display: flex; align-items: center; gap: 8px; }

.grid { display: grid; grid-template-columns: 1fr 1fr; padding: 10px; }
.panel {
  --dash: #bebebe 0 10px, transparent 10px 22px, #bebebe 22px 24px;
  position: relative;
  min-width: 0;
  padding: 4px;
  background:
    repeating-linear-gradient(90deg, var(--dash)) top / 100% 4px no-repeat,
    repeating-linear-gradient(90deg, var(--dash)) bottom / 100% 4px no-repeat,
    repeating-linear-gradient(180deg, var(--dash)) left / 4px 100% no-repeat,
    repeating-linear-gradient(180deg, var(--dash)) right / 4px 100% no-repeat;
}
.panel header { height: 46px; display: flex; justify-content: space-between; padding: 0 13px 0 10px; }
.panel h2 { margin: 0; font-size: 28px; line-height: 40px; font-weight: 400; color: #7b8a89; }
.panel-tools { display: flex; align-items: center; gap: 28px; height: 38px; }
.panel-body { height: 546px; display: flex; }
.chart { flex: 1; min-width: 0; }
.pie { padding: 36px 8px 0 0; display: flex; justify-content: center; }
.donut { position: relative; width: 468px; height: 468px; }
.bars { width: 100%; height: 546px; }
.bar { fill: #d77563; stroke: #c01b00; stroke-width: 2; }
.axis { fill: none; stroke: #ddd; stroke-width: 2; }
.label { font-size: 22px; fill: #848e96; text-anchor: end; }
.axis-title { font-size: 24px; font-weight: 700; fill: #848e96; text-anchor: middle; }
.legend { width: 336px; display: flex; align-items: flex-start; gap: 14px; }
.legend-toggle { margin-top: 15px; }
.legend ul { list-style: none; margin: 4px 0 0; padding: 0; }
.legend li { height: 38px; }
.key { display: flex; align-items: center; gap: 6px; height: 38px; font-size: 24px; color: #666; }
.key::before { content: ""; width: 21px; height: 21px; border-radius: 50%; background: var(--c); }
.dim { color: #b4b4b4; }
.count { --c: #c01b00; }
.e { --c: #aae0bd; }
.d { --c: #b7c3eb; }
.b { --c: #b19edb; }
.a { --c: #bb52bc; }
.c { --c: #d09a98; }
.spy { position: absolute; left: 22px; bottom: 14px; }
.resize { position: absolute; right: 19px; bottom: 19px; width: 13px; height: 12px; border: solid #444; border-width: 0 4px 4px 0; }
.tooltip {
  position: absolute;
  left: 174px;
  top: 102px;
  padding: 16px;
  border-radius: 8px;
  background: rgba(34, 34, 34, .93);
  color: #ecf0f1;
  font-size: 28px;
  line-height: 47px;
  white-space: nowrap;
}
.tooltip table { border-collapse: collapse; }
.tooltip th, .tooltip td { padding: 0 8px; text-align: left; }

/* Dock */
.dock {
  position: absolute;
  left: 50%;
  bottom: 0;
  transform: translateX(-50%);
  z-index: 2;
  height: 98px;
  display: flex;
  padding: 6px;
  border-radius: 12px 12px 0 0;
  background: #777;
  box-shadow: 0 0 60px rgba(0, 0, 0, .18);
}
.app { position: relative; width: 80px; height: 80px; }
.app svg { width: 80px; height: 80px; }
.running::after {
  content: "";
  position: absolute;
  left: 36px;
  bottom: -8px;
  width: 8px;
  height: 8px;
  border-radius: 50%;
  background: #eee;
}
.dock-rule { width: 2px; height: 70px; margin: 6px 17px; background: #a8a8a8; }
.prompt { font: 20px "Liberation Mono", monospace; fill: #2be02b; }
.letter { font-family: "Open Sans", sans-serif; font-weight: 700; }
.n { font-size: 34px; fill: #fff; }
.s { font-size: 34px; fill: #16191e; }
```
